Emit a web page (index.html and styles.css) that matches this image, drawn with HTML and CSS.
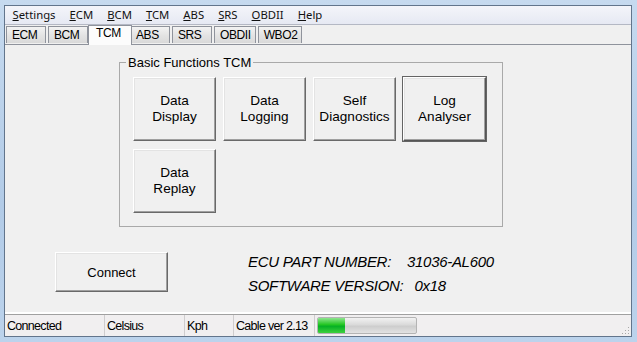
FILE: index.html
```html
<!DOCTYPE html>
<html lang="en">
<head>
  <meta charset="UTF-8">
  <title>TCM</title>
  <link rel="stylesheet" href="styles.css">
</head>
<body>
  <div class="window">
    <div class="app">
      <nav class="menubar">
        <span class="menu-item"><u>S</u>ettings</span>
        <span class="menu-item"><u>E</u>CM</span>
        <span class="menu-item"><u>B</u>CM</span>
        <span class="menu-item"><u>T</u>CM</span>
        <span class="menu-item"><u>A</u>BS</span>
        <span class="menu-item"><u>S</u>RS</span>
        <span class="menu-item"><u>O</u>BDII</span>
        <span class="menu-item"><u>H</u>elp</span>
      </nav>

      <div class="tabs">
        <span class="tab">ECM</span>
        <span class="tab">BCM</span>
        <span class="tab active">TCM</span>
        <span class="tab">ABS</span>
        <span class="tab">SRS</span>
        <span class="tab">OBDII</span>
        <span class="tab">WBO2</span>
      </div>

      <main class="panel">
        <fieldset class="group">
          <legend>Basic Functions TCM</legend>
          <div class="func-grid">
            <button class="btn func">Data<br>Display</button>
            <button class="btn func">Data<br>Logging</button>
            <button class="btn func">Self<br>Diagnostics</button>
            <button class="btn func default">Log<br>Analyser</button>
            <button class="btn func">Data<br>Replay</button>
          </div>
        </fieldset>

        <div class="connect-row">
          <button class="btn connect">Connect</button>
          <div class="ecu-info">
            <div>ECU PART NUMBER:<span class="val val-part">31036-AL600</span></div>
            <div>SOFTWARE VERSION:<span class="val">0x18</span></div>
          </div>
        </div>
      </main>

      <footer class="statusbar">
        <span class="cell cell-conn">Connected</span>
        <span class="cell cell-temp">Celsius</span>
        <span class="cell cell-speed">Kph</span>
        <span class="cell cell-cable">Cable ver 2.13</span>
        <div class="progress"><div class="progress-fill" style="width: 28%"></div></div>
        <svg class="grip" width="10" height="10" viewBox="0 0 10 10">
          <rect x="8" y="2" width="1" height="1" fill="#a8a8a8"/>
          <rect x="5" y="5" width="1" height="1" fill="#a8a8a8"/>
          <rect x="8" y="5" width="1" height="1" fill="#a8a8a8"/>
          <rect x="2" y="8" width="1" height="1" fill="#a8a8a8"/>
          <rect x="5" y="8" width="1" height="1" fill="#a8a8a8"/>
          <rect x="8" y="8" width="1" height="1" fill="#a8a8a8"/>
        </svg>
      </footer>
    </div>
  </div>
</body>
</html>
```

FILE: styles.css
```css
* {
  box-sizing: border-box;
}
html, body {
  margin: 0;
  height: 100%;
}
body {
  font-family: "Liberation Sans", Arial, sans-serif;
  color: #000;
}
.window {
  height: 342px;
  padding: 5px 5px 5px 4px;
  background: linear-gradient(180deg, #c6daef 0%, #b2cbe7 60%, #bcd3ec 100%);
}
.app {
  height: 100%;
  display: flex;
  flex-direction: column;
  border: 1px solid #62758c;
  background: #f0f0f0;
}

/* menu */
.menubar {
  height: 19px;
  display: flex;
  font-family: "Noto Sans", sans-serif;
  font-size: 11.3px;
  line-height: 18px;
  background: linear-gradient(180deg, #f4f5fa 0%, #e6e9f3 100%);
  border-bottom: 1px solid #b4b8c4;
}
.menu-item {
  padding: 0 7px;
  color: #111;
}
.menu-item:first-child {
  padding-left: 7.5px;
}

/* tabs */
.tabs {
  height: 19px;
  display: flex;
  align-items: flex-end;
  padding-left: 1px;
  font-family: "Liberation Sans", sans-serif;
  font-size: 12px;
  letter-spacing: -0.4px;
}
.tab {
  min-width: 40px;
  height: 17px;
  margin-right: 2px;
  padding: 1px 4px 0 5px;
  margin-bottom: 1px;
  border: 1px solid #8f939c;
  border-bottom: none;
  background: linear-gradient(180deg, #f3f3f3 0%, #e4e4e4 50%, #d9d9d9 100%);
  line-height: 14px;
}
.tab.active {
  height: 20px;
  margin: 0 0 -1px -2px;
  min-width: 44px;
  padding: 0 4px 0 7px;
  background: #fcfcfc;
  position: relative;
  z-index: 1;
}
.tab.active + .tab {
  margin-left: -2px;
}

/* panel */
.panel {
  flex: 1;
  border-top: 1px solid #8f939c;
  border-bottom: 2px solid #fff;
  padding-top: 10px;
}
.group {
  width: 384px;
  margin: 0 0 0 114px;
  padding: 0 0 13px 6px;
  border: 1px solid #a9a9a9;
}
.group legend {
  padding: 0 2px;
  font-size: 13px;
  line-height: 15px;
}
.func-grid {
  display: grid;
  grid-template-columns: repeat(4, 83px);
  grid-auto-rows: 64px;
  column-gap: 7px;
  row-gap: 8px;
  margin: 7px 0 0 7px;
}
.btn {
  padding: 0;
  font-family: "Liberation Sans", Arial, sans-serif;
  color: #000;
  background: #f0f0f0;
  border: 1px solid;
  border-color: #fff #696969 #696969 #fff;
  box-shadow: inset -1px -1px #a0a0a0, inset 1px 1px #e3e3e3;
}
.func {
  font-size: 13.6px;
  line-height: 16px;
}
.func.default {
  outline: 1px solid #646464;
  outline-offset: 0;
  border-color: #fff #555 #555 #fff;
}

.connect-row {
  display: flex;
  align-items: flex-start;
  margin-top: 25px;
}
.connect {
  width: 113px;
  height: 40px;
  margin-left: 50px;
  font-size: 13px;
}
.ecu-info {
  margin: -2px 0 0 80px;
  font-size: 15px;
  font-style: italic;
  line-height: 24px;
  letter-spacing: -0.3px;
}
.val {
  margin-left: 11px;
}
.val-part {
  margin-left: 16px;
}

/* status bar */
.statusbar {
  height: 22px;
  display: flex;
  align-items: center;
  border-top: 1px solid #a0a0a0;
  background: #f1eff0;
  font-family: "Liberation Sans", sans-serif;
  font-size: 12.5px;
  letter-spacing: -0.7px;
  white-space: nowrap;
}
.cell {
  height: 100%;
  padding: 3px 0 0 2px;
  border-right: 1px solid #cfcdce;
  line-height: 16px;
}
.cell-conn {
  width: 100px;
}
.cell-temp {
  width: 80px;
}
.cell-speed {
  width: 49px;
}
.cell-cable {
  width: 81px;
}
.progress {
  width: 100px;
  height: 17px;
  margin-left: 2px;
  border: 1px solid #b4b4b4;
  border-radius: 2px;
  background: linear-gradient(180deg, #f2f2f2 0%, #dadada 45%, #cdcdcd 55%, #e2e2e2 100%);
  overflow: hidden;
}
.progress-fill {
  height: 100%;
  background: linear-gradient(180deg, #8de58d 0%, #21c521 45%, #06b025 55%, #3dd13d 100%);
}
.grip {
  margin: auto 1px 1px auto;
}
```
